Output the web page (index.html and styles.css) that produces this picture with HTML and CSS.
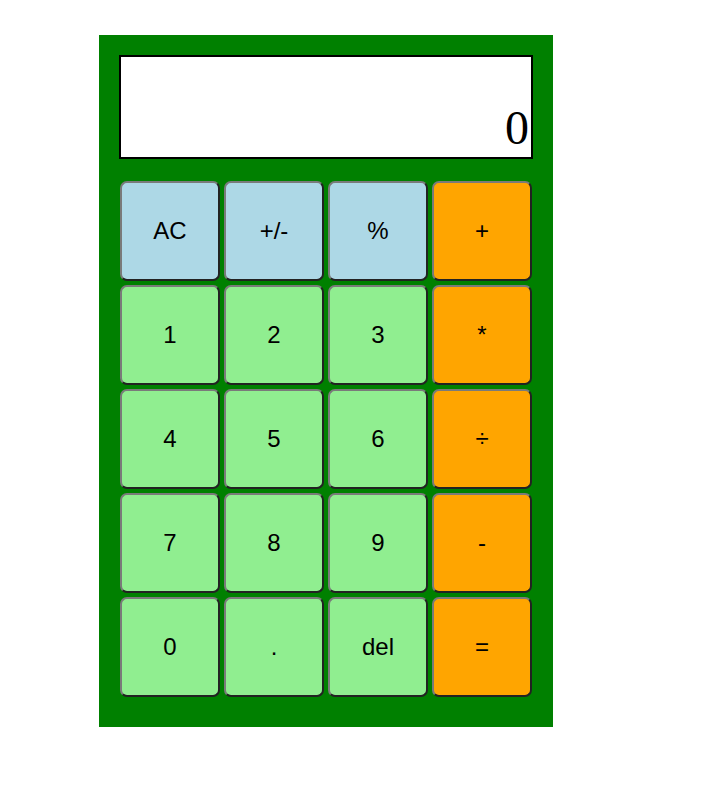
FILE: index.html
```html
<!DOCTYPE html>
<html>
<head>
<meta charset="utf-8">
<link rel="stylesheet" href="styles.css">
</head>
<body>
<div class="calculator">
  <div class="display">0</div>
  <div class="keys">
    <button class="key fn">AC</button>
    <button class="key fn">+/-</button>
    <button class="key fn">%</button>
    <button class="key op">+</button>
    <button class="key num">1</button>
    <button class="key num">2</button>
    <button class="key num">3</button>
    <button class="key op">*</button>
    <button class="key num">4</button>
    <button class="key num">5</button>
    <button class="key num">6</button>
    <button class="key op">÷</button>
    <button class="key num">7</button>
    <button class="key num">8</button>
    <button class="key num">9</button>
    <button class="key op">-</button>
    <button class="key num">0</button>
    <button class="key num">.</button>
    <button class="key num">del</button>
    <button class="key op">=</button>
  </div>
</div>
</body>
</html>
```

FILE: styles.css
```css
html, body {
  margin: 0;
  padding: 0;
  background: #ffffff;
}
body {
  padding: 35px 0 0 99px;
}
.calculator {
  width: 414px;
  padding: 20px 20px 30px 20px;
  background: #008000;
}
.display {
  box-sizing: border-box;
  width: 414px;
  height: 104px;
  border: 2px solid #000;
  background: #fff;
  font-family: "Liberation Serif", serif;
  font-size: 48px;
  line-height: 1;
  text-align: right;
  display: flex;
  align-items: flex-end;
  justify-content: flex-end;
  padding: 0 2px 5px 0;
}
.keys {
  margin-top: 22px;
  padding-left: 1px;
  display: grid;
  grid-template-columns: repeat(4, 100px);
  grid-auto-rows: 100px;
  gap: 4px;
}
.key {
  box-sizing: border-box;
  width: 100px;
  height: 100px;
  margin: 0;
  padding: 0;
  border-width: 2px;
  border-style: solid;
  border-color: #7a7a7a #222 #222 #7a7a7a;
  border-radius: 7px;
  font-family: "Liberation Sans", Arial, sans-serif;
  font-size: 24px;
  color: #000;
}
.fn { background: #add8e6; }
.num { background: #90ee90; }
.op { background: #ffa500; }
```
